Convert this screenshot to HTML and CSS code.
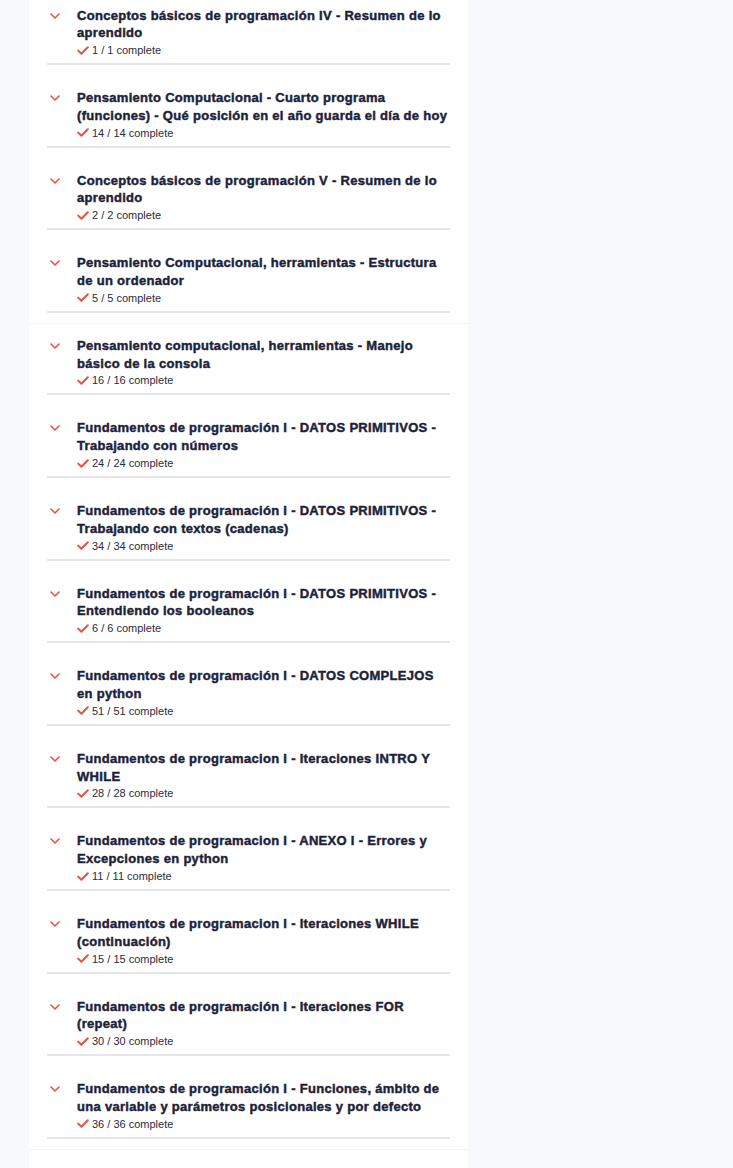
FILE: index.html
```html
<!DOCTYPE html>
<html lang="es">
<head>
<meta charset="utf-8">
<title>Curso</title>
<link rel="stylesheet" href="styles.css">
</head>
<body>
<div class="panel">
  <section class="group">
    <div class="item">
      <span class="chev"><svg viewBox="0 0 10 6" width="10" height="6"><path d="M1 1l4 4 4-4" fill="none" stroke="currentColor" stroke-width="1.6" stroke-linecap="round" stroke-linejoin="round"/></svg></span>
      <div class="body">
        <div class="title">Conceptos básicos de programación IV - Resumen de lo aprendido</div>
        <div class="meta"><svg class="check" viewBox="0 0 12 9" width="12" height="9"><path d="M1.2 4.6l3.2 3.1L10.8 1.2" fill="none" stroke="currentColor" stroke-width="2" stroke-linecap="round" stroke-linejoin="round"/></svg>1 / 1 complete</div>
      </div>
    </div>
    <div class="item">
      <span class="chev"><svg viewBox="0 0 10 6" width="10" height="6"><path d="M1 1l4 4 4-4" fill="none" stroke="currentColor" stroke-width="1.6" stroke-linecap="round" stroke-linejoin="round"/></svg></span>
      <div class="body">
        <div class="title">Pensamiento Computacional - Cuarto programa (funciones) - Qué posición en el año guarda el día de hoy</div>
        <div class="meta"><svg class="check" viewBox="0 0 12 9" width="12" height="9"><path d="M1.2 4.6l3.2 3.1L10.8 1.2" fill="none" stroke="currentColor" stroke-width="2" stroke-linecap="round" stroke-linejoin="round"/></svg>14 / 14 complete</div>
      </div>
    </div>
    <div class="item">
      <span class="chev"><svg viewBox="0 0 10 6" width="10" height="6"><path d="M1 1l4 4 4-4" fill="none" stroke="currentColor" stroke-width="1.6" stroke-linecap="round" stroke-linejoin="round"/></svg></span>
      <div class="body">
        <div class="title">Conceptos básicos de programación V - Resumen de lo aprendido</div>
        <div class="meta"><svg class="check" viewBox="0 0 12 9" width="12" height="9"><path d="M1.2 4.6l3.2 3.1L10.8 1.2" fill="none" stroke="currentColor" stroke-width="2" stroke-linecap="round" stroke-linejoin="round"/></svg>2 / 2 complete</div>
      </div>
    </div>
    <div class="item">
      <span class="chev"><svg viewBox="0 0 10 6" width="10" height="6"><path d="M1 1l4 4 4-4" fill="none" stroke="currentColor" stroke-width="1.6" stroke-linecap="round" stroke-linejoin="round"/></svg></span>
      <div class="body">
        <div class="title">Pensamiento Computacional, herramientas - Estructura de un ordenador</div>
        <div class="meta"><svg class="check" viewBox="0 0 12 9" width="12" height="9"><path d="M1.2 4.6l3.2 3.1L10.8 1.2" fill="none" stroke="currentColor" stroke-width="2" stroke-linecap="round" stroke-linejoin="round"/></svg>5 / 5 complete</div>
      </div>
    </div>
  </section>
  <section class="group">
    <div class="item">
      <span class="chev"><svg viewBox="0 0 10 6" width="10" height="6"><path d="M1 1l4 4 4-4" fill="none" stroke="currentColor" stroke-width="1.6" stroke-linecap="round" stroke-linejoin="round"/></svg></span>
      <div class="body">
        <div class="title">Pensamiento computacional, herramientas - Manejo básico de la consola</div>
        <div class="meta"><svg class="check" viewBox="0 0 12 9" width="12" height="9"><path d="M1.2 4.6l3.2 3.1L10.8 1.2" fill="none" stroke="currentColor" stroke-width="2" stroke-linecap="round" stroke-linejoin="round"/></svg>16 / 16 complete</div>
      </div>
    </div>
    <div class="item">
      <span class="chev"><svg viewBox="0 0 10 6" width="10" height="6"><path d="M1 1l4 4 4-4" fill="none" stroke="currentColor" stroke-width="1.6" stroke-linecap="round" stroke-linejoin="round"/></svg></span>
      <div class="body">
        <div class="title">Fundamentos de programación I - DATOS PRIMITIVOS - Trabajando con números</div>
        <div class="meta"><svg class="check" viewBox="0 0 12 9" width="12" height="9"><path d="M1.2 4.6l3.2 3.1L10.8 1.2" fill="none" stroke="currentColor" stroke-width="2" stroke-linecap="round" stroke-linejoin="round"/></svg>24 / 24 complete</div>
      </div>
    </div>
    <div class="item">
      <span class="chev"><svg viewBox="0 0 10 6" width="10" height="6"><path d="M1 1l4 4 4-4" fill="none" stroke="currentColor" stroke-width="1.6" stroke-linecap="round" stroke-linejoin="round"/></svg></span>
      <div class="body">
        <div class="title">Fundamentos de programación I - DATOS PRIMITIVOS - Trabajando con textos (cadenas)</div>
        <div class="meta"><svg class="check" viewBox="0 0 12 9" width="12" height="9"><path d="M1.2 4.6l3.2 3.1L10.8 1.2" fill="none" stroke="currentColor" stroke-width="2" stroke-linecap="round" stroke-linejoin="round"/></svg>34 / 34 complete</div>
      </div>
    </div>
    <div class="item">
      <span class="chev"><svg viewBox="0 0 10 6" width="10" height="6"><path d="M1 1l4 4 4-4" fill="none" stroke="currentColor" stroke-width="1.6" stroke-linecap="round" stroke-linejoin="round"/></svg></span>
      <div class="body">
        <div class="title">Fundamentos de programación I - DATOS PRIMITIVOS - Entendiendo los booleanos</div>
        <div class="meta"><svg class="check" viewBox="0 0 12 9" width="12" height="9"><path d="M1.2 4.6l3.2 3.1L10.8 1.2" fill="none" stroke="currentColor" stroke-width="2" stroke-linecap="round" stroke-linejoin="round"/></svg>6 / 6 complete</div>
      </div>
    </div>
    <div class="item">
      <span class="chev"><svg viewBox="0 0 10 6" width="10" height="6"><path d="M1 1l4 4 4-4" fill="none" stroke="currentColor" stroke-width="1.6" stroke-linecap="round" stroke-linejoin="round"/></svg></span>
      <div class="body">
        <div class="title">Fundamentos de programación I - DATOS COMPLEJOS en python</div>
        <div class="meta"><svg class="check" viewBox="0 0 12 9" width="12" height="9"><path d="M1.2 4.6l3.2 3.1L10.8 1.2" fill="none" stroke="currentColor" stroke-width="2" stroke-linecap="round" stroke-linejoin="round"/></svg>51 / 51 complete</div>
      </div>
    </div>
    <div class="item">
      <span class="chev"><svg viewBox="0 0 10 6" width="10" height="6"><path d="M1 1l4 4 4-4" fill="none" stroke="currentColor" stroke-width="1.6" stroke-linecap="round" stroke-linejoin="round"/></svg></span>
      <div class="body">
        <div class="title">Fundamentos de programacion I - Iteraciones INTRO Y WHILE</div>
        <div class="meta"><svg class="check" viewBox="0 0 12 9" width="12" height="9"><path d="M1.2 4.6l3.2 3.1L10.8 1.2" fill="none" stroke="currentColor" stroke-width="2" stroke-linecap="round" stroke-linejoin="round"/></svg>28 / 28 complete</div>
      </div>
    </div>
    <div class="item">
      <span class="chev"><svg viewBox="0 0 10 6" width="10" height="6"><path d="M1 1l4 4 4-4" fill="none" stroke="currentColor" stroke-width="1.6" stroke-linecap="round" stroke-linejoin="round"/></svg></span>
      <div class="body">
        <div class="title">Fundamentos de programacion I - ANEXO I - Errores y Excepciones en python</div>
        <div class="meta"><svg class="check" viewBox="0 0 12 9" width="12" height="9"><path d="M1.2 4.6l3.2 3.1L10.8 1.2" fill="none" stroke="currentColor" stroke-width="2" stroke-linecap="round" stroke-linejoin="round"/></svg>11 / 11 complete</div>
      </div>
    </div>
    <div class="item">
      <span class="chev"><svg viewBox="0 0 10 6" width="10" height="6"><path d="M1 1l4 4 4-4" fill="none" stroke="currentColor" stroke-width="1.6" stroke-linecap="round" stroke-linejoin="round"/></svg></span>
      <div class="body">
        <div class="title">Fundamentos de programacion I - Iteraciones WHILE (continuación)</div>
        <div class="meta"><svg class="check" viewBox="0 0 12 9" width="12" height="9"><path d="M1.2 4.6l3.2 3.1L10.8 1.2" fill="none" stroke="currentColor" stroke-width="2" stroke-linecap="round" stroke-linejoin="round"/></svg>15 / 15 complete</div>
      </div>
    </div>
    <div class="item">
      <span class="chev"><svg viewBox="0 0 10 6" width="10" height="6"><path d="M1 1l4 4 4-4" fill="none" stroke="currentColor" stroke-width="1.6" stroke-linecap="round" stroke-linejoin="round"/></svg></span>
      <div class="body">
        <div class="title">Fundamentos de programación I - Iteraciones FOR (repeat)</div>
        <div class="meta"><svg class="check" viewBox="0 0 12 9" width="12" height="9"><path d="M1.2 4.6l3.2 3.1L10.8 1.2" fill="none" stroke="currentColor" stroke-width="2" stroke-linecap="round" stroke-linejoin="round"/></svg>30 / 30 complete</div>
      </div>
    </div>
    <div class="item">
      <span class="chev"><svg viewBox="0 0 10 6" width="10" height="6"><path d="M1 1l4 4 4-4" fill="none" stroke="currentColor" stroke-width="1.6" stroke-linecap="round" stroke-linejoin="round"/></svg></span>
      <div class="body">
        <div class="title">Fundamentos de programación I - Funciones, ámbito de una variable y parámetros posicionales y por defecto</div>
        <div class="meta"><svg class="check" viewBox="0 0 12 9" width="12" height="9"><path d="M1.2 4.6l3.2 3.1L10.8 1.2" fill="none" stroke="currentColor" stroke-width="2" stroke-linecap="round" stroke-linejoin="round"/></svg>36 / 36 complete</div>
      </div>
    </div>
  </section>
</div>
</body>
</html>
```
FILE: styles.css
```css
html, body {
  margin: 0;
  padding: 0;
}
body {
  background: #f8f9fd;
  font-family: "Liberation Sans", Arial, sans-serif;
  color: #1e1f3a;
  min-height: 1168px;
  overflow: hidden;
}
.panel {
  width: 439px;
  margin-left: 29px;
  margin-top: -6.5px;
  background: #ffffff;
  padding-bottom: 60px;
}
.group {
  border-bottom: 1px solid #f4f4f6;
}
.item {
  display: flex;
  margin: 0 18px 11px;
  padding: 13px 0 5px;
  border-bottom: 2px solid #e6e6e8;
}
.item:last-child {
  margin-bottom: 10px;
}
.chev {
  width: 30px;
  flex: none;
  color: #e4553f;
  display: flex;
  padding-left: 3px;
  padding-top: 6px;
  box-sizing: border-box;
  height: 18px;
}
.chev svg {
  display: block;
}
.body {
  flex: 1;
  min-width: 0;
  margin-right: -2px;
}
.title {
  font-size: 13px;
  line-height: 17.8px;
  font-weight: 700;
  letter-spacing: 0.3px;
  color: #1e1f3a;
  -webkit-text-stroke: 0.45px #1e1f3a;
}
.meta {
  display: flex;
  align-items: center;
  font-size: 11px;
  line-height: 16px;
  color: #2a2b3d;
}
.check {
  color: #e4553f;
  margin-right: 3px;
  flex: none;
}
```
